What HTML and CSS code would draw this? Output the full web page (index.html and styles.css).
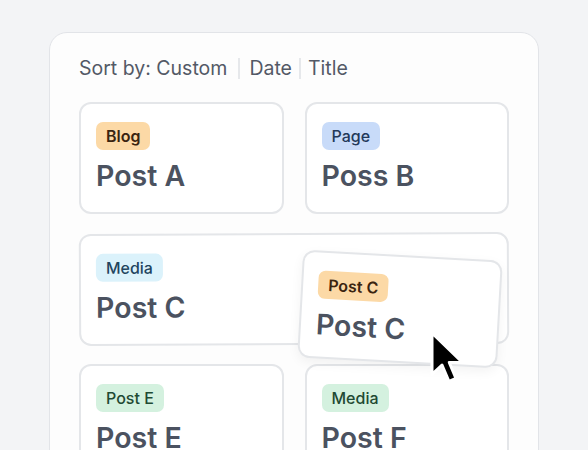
FILE: index.html
```html
<!DOCTYPE html>
<html>
<head>
<meta charset="utf-8">
<link rel="stylesheet" href="styles.css">
</head>
<body>
<div class="panel">
  <div class="sort">
    <span>Sort by: Custom</span><span class="sep sep1"></span><span>Date</span><span class="sep sep2"></span><span>Title</span>
  </div>
  <div class="grid">
    <div class="card">
      <span class="badge orange">Blog</span>
      <div class="title">Post A</div>
    </div>
    <div class="card">
      <span class="badge blue">Page</span>
      <div class="title">Poss B</div>
    </div>
    <div class="card wide">
      <span class="badge cyan">Media</span>
      <div class="title">Post C</div>
    </div>
    <div class="card">
      <span class="badge green">Post E</span>
      <div class="title">Post E</div>
    </div>
    <div class="card">
      <span class="badge green">Media</span>
      <div class="title">Post F</div>
    </div>
  </div>
  <div class="card dragged">
    <span class="badge orange">Post C</span>
    <div class="title">Post C</div>
  </div>
  <svg class="cursor" width="50" height="70" viewBox="-2 -2 20 28">
    <path d="M0 0 L0 16.5 L4 12.8 L6.8 19.4 L9.6 18.2 L6.9 11.8 L12.2 11.8 Z" fill="#000" stroke="#fff" stroke-width="1.2" stroke-linejoin="round"/>
  </svg>
</div>
</body>
</html>
```

FILE: styles.css
```css
html, body {
  margin: 0;
  padding: 0;
  overflow: hidden;
  background: #f3f4f6;
  font-family: Inter, "Noto Sans", sans-serif;
}

.panel {
  position: relative;
  margin: 32px 0 0 49px;
  width: 490px;
  box-sizing: border-box;
  border: 1px solid #e2e4e8;
  border-radius: 18px;
  background: #fdfdfd;
  padding: 23px 29px 40px 29px;
}

.sort {
  display: flex;
  align-items: center;
  font-size: 19.5px;
  line-height: 24px;
  color: #535966;
}

.sep {
  display: inline-block;
  width: 2px;
  height: 21px;
  background: #e6e8eb;
}
.sep1 { margin: 0 9px 0 11px; }
.sep2 { margin: 0 7px 0 7px; }

.grid {
  margin-top: 22px;
  display: grid;
  grid-template-columns: 1fr 1fr;
  column-gap: 21px;
  row-gap: 19px;
}

.card {
  box-sizing: border-box;
  border: 2px solid #e4e6e9;
  border-radius: 12px;
  background: #fff;
  padding: 18px 15px 17px 15px;
  height: 112px;
}

.wide {
  grid-column: span 2;
  transform: rotate(-0.25deg);
}

.badge {
  display: inline-block;
  height: 28px;
  line-height: 28px;
  padding: 0 10px;
  border-radius: 7px;
  font-size: 16px;
  font-weight: 600;
}
.orange { background: #fcd9a6; color: #3a2410; }
.blue { background: #c8dbf9; color: #23395a; font-weight: 500; }
.cyan { background: #dbf2fb; color: #21445e; font-weight: 500; }
.green { background: #d4f1df; color: #1f4a33; font-weight: 500; }

.title {
  margin-top: 9px;
  font-size: 28.5px;
  line-height: 34px;
  font-weight: 600;
  color: #4b5260;
}

.dragged {
  position: absolute;
  left: 250px;
  top: 222px;
  width: 200px;
  height: 108px;
  transform: rotate(3.2deg);
  box-shadow: 0 4px 12px rgba(0, 0, 0, 0.05);
}

.cursor {
  position: absolute;
  left: 377px;
  top: 295px;
}
```
